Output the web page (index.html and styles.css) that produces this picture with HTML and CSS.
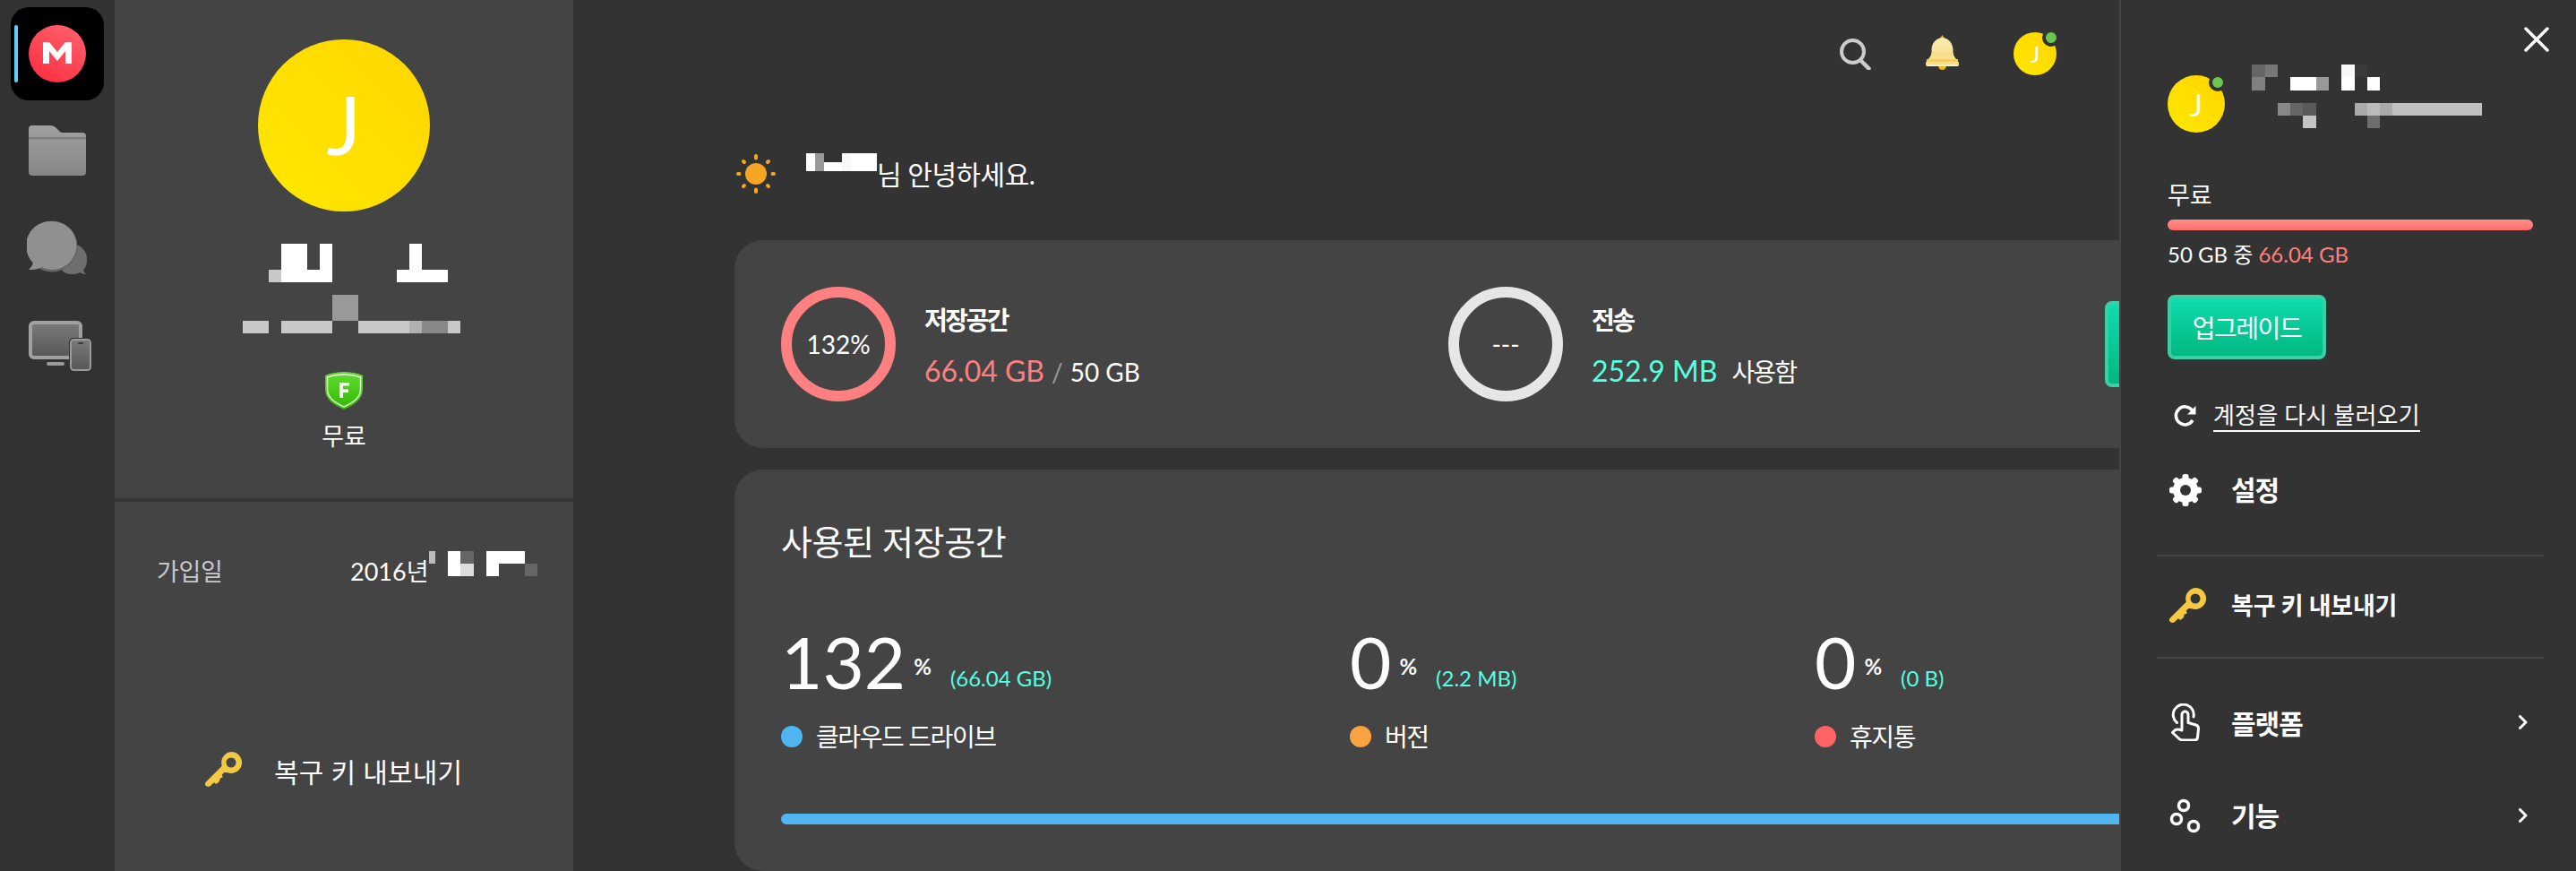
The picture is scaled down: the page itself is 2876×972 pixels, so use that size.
FILE: index.html
```html
<!DOCTYPE html>
<html lang="ko">
<head>
<meta charset="utf-8">
<title>MEGA 대시보드</title>
<link rel="stylesheet" href="styles.css">
</head>
<body>
<nav class="rail">
  <div class="rail-home">
    <span class="rail-marker"></span>
    <svg class="rail-logo" width="64" height="64" viewBox="0 0 64 64"><defs><linearGradient id="lg" x1="0.8" y1="0" x2="0.2" y2="1"><stop offset="0" stop-color="#ff5f6d"/><stop offset="1" stop-color="#ff3040"/></linearGradient></defs><circle cx="32" cy="32" r="32" fill="url(#lg)"/><path d="M16 19h7l9 11 9-11h7v24h-7V29l-9 11-9-11v14h-7z" fill="#fff"/></svg>
  </div>
  <svg class="rail-folder" width="64" height="56" viewBox="0 0 64 56"><defs><linearGradient id="fg" x1="0" y1="0" x2="0" y2="1"><stop offset="0" stop-color="#a0a0a0"/><stop offset="1" stop-color="#868686"/></linearGradient></defs><path d="M0 4a4 4 0 0 1 4-4h20c3 0 5 1 7 3l3 3c1 1 2 2 4 2h22a4 4 0 0 1 4 4v40a4 4 0 0 1-4 4H4a4 4 0 0 1-4-4z" fill="url(#fg)"/><rect y="13" width="64" height="2.5" fill="#7c7c7c"/></svg>
  <svg class="rail-chat" width="68" height="62" viewBox="30 245 68 62"><path d="M83 272a15 16 0 0 1 14 17c0 6-2 9-4 12 1 2 2 3 4 4-4 0-6-1-8-2-3 2-6 2-9 2-6 0-11-3-13-8z" fill="#6e6e6e"/><circle cx="58" cy="274" r="28.5" fill="#666"/><path d="M58 246a27 27 0 1 1-12 51c-4 3-9 3-14 3 2-2 4-4 5-8a27 27 0 0 1 21-46z" fill="#909090"/></svg>
  <svg class="rail-devices" width="70" height="56" viewBox="32 356 70 56"><defs><linearGradient id="dg" x1="0" y1="0" x2="0" y2="1"><stop offset="0" stop-color="#7a7a7a"/><stop offset="1" stop-color="#575757"/></linearGradient></defs><rect x="34" y="358" width="56" height="39" rx="4" fill="url(#dg)" stroke="#a0a0a0" stroke-width="4"/><rect x="52" y="402" width="20" height="4" rx="2" fill="#9a9a9a"/><rect x="77" y="375" width="25" height="37" rx="5" fill="#333"/><rect x="79" y="377" width="22" height="34" rx="3.5" fill="url(#dg)" stroke="#9a9a9a" stroke-width="2"/><rect x="87" y="380" width="6" height="2" rx="1" fill="#3a3a3a"/></svg>
</nav>

<aside class="profile">
  <section class="profile-top">
    <div class="avatar-large">J</div>
    <svg class="profile-mosaic" width="243" height="100" viewBox="0 0 243 100" shape-rendering="crispEdges">
      <rect x="43" width="29" height="43" fill="#fff"/><rect x="86" width="14" height="43" fill="#fff"/><rect x="186" width="14" height="29" fill="#fff"/>
      <rect x="29" y="29" width="14" height="14" fill="#c8c8c8"/><rect x="72" y="29" width="14" height="14" fill="#fff"/><rect x="172" y="29" width="57" height="14" fill="#fff"/>
      <rect x="100" y="57" width="29" height="29" fill="#999"/>
      <rect y="86" width="29" height="14" fill="#c8c8c8"/><rect x="43" y="86" width="57" height="14" fill="#c8c8c8"/><rect x="129" y="86" width="57" height="14" fill="#c8c8c8"/><rect x="186" y="86" width="14" height="14" fill="#b0b0b0"/><rect x="200" y="86" width="29" height="14" fill="#888"/><rect x="229" y="86" width="14" height="14" fill="#c8c8c8"/>
    </svg>
    <svg class="shield" width="44" height="43" viewBox="0 0 44 43"><defs><linearGradient id="sg" x1="0" y1="0" x2="0" y2="1"><stop offset="0" stop-color="#62dc30"/><stop offset="1" stop-color="#30b800"/></linearGradient></defs><path d="M1 5C8 2 15 1 22 1s14 1 21 4v16c0 10-9 17-21 22C10 38 1 31 1 21z" fill="url(#sg)"/><path d="M3.500 7C9 5 15 4 22 4s13 1 18.500 3v14c0 8-7 14-18.500 19C10.500 35 3.500 29 3.500 21z" fill="none" stroke="#e8f8e0" stroke-width="1.500"/><path d="M17 13h11v3.500h-7v4h6v3.500h-6v6h-4z" fill="#fff"/></svg>
    <p class="plan-name">무료</p>
  </section>
  <section class="profile-bottom">
    <div class="joined">
      <span class="joined-label">가입일</span>
      <span class="joined-value">2016년</span>
      <svg class="joined-mosaic" width="121" height="28" viewBox="0 0 121 28" shape-rendering="crispEdges"><rect width="7" height="14" fill="#bbb"/><rect x="21" width="14" height="28" fill="#fff"/><rect x="35" width="15" height="14" fill="#666"/><rect x="35" y="14" width="15" height="14" fill="#ddd"/><rect x="64" width="14" height="28" fill="#fff"/><rect x="78" width="29" height="14" fill="#fff"/><rect x="107" y="14" width="14" height="14" fill="#666"/></svg>
    </div>
    <div class="export">
      <svg width="42" height="42" viewBox="0 0 42 42"><use href="#key"/></svg>
      <span class="export-label">복구 키 내보내기</span>
    </div>
  </section>
</aside>

<main class="main">
  <header class="topbar">
    <svg width="35" height="35" viewBox="0 0 35 35"><circle cx="14.500" cy="14.500" r="12.500" fill="none" stroke="#ccc" stroke-width="4"/><path d="M23 24l9.500 9.500" stroke="#ccc" stroke-width="4.500" stroke-linecap="round"/></svg>
    <svg class="bell" width="37" height="39" viewBox="0 0 37 39"><defs><linearGradient id="bg" x1="0" y1="0" x2="0" y2="1"><stop offset="0" stop-color="#fbe9ae"/><stop offset="1" stop-color="#f7dc85"/></linearGradient></defs><path d="M18.500 0l2.500 4h-5z" fill="#f0b90b"/><path d="M14 34h9c0 3-2 5-4.500 5S14 37 14 34z" fill="#f0b90b"/><path d="M18.500 3C24 3 30 8 30.500 16v4c.5 4 3.500 7 5.500 9 .7 1 1 2 1 3v1c0 1.500-1 2-2 2H2c-1 0-2-.5-2-2v-1c0-1 .3-2 1-3 2-2 5-5 5.500-9v-4C7 8 13 3 18.500 3z" fill="url(#bg)"/><rect x="6.500" y="20" width="24" height="2.500" fill="#f7dd8c"/><rect x="1" y="27" width="35" height="3" fill="#f3cf5f"/><rect x="1" y="33" width="35" height="2" fill="#fdf0c4"/></svg>
    <div class="avatar-small">J<span class="status-dot"></span></div>
  </header>

  <div class="greeting">
    <svg width="44" height="44" viewBox="0 0 44 44"><circle cx="22" cy="22" r="12" fill="#f6a623"/><g stroke="#f6a623" stroke-width="4" stroke-linecap="round"><path d="M22 2v2.500M22 39.500V42M2 22h1.500M40.500 22H42M8 8l1 1M35 35l1 1M36 8l-1 1M9 35l-1 1"/></g></svg>
    <svg class="greeting-mosaic" width="79" height="20" viewBox="0 0 79 20" shape-rendering="crispEdges"><rect width="10" height="20" fill="#fff"/><rect x="10" width="10" height="20" fill="#999"/><rect x="20" y="10" width="20" height="10" fill="#fff"/><rect x="40" width="10" height="20" fill="#f8f8f8"/><rect x="50" width="29" height="20" fill="#fff"/></svg>
    <span class="greeting-text">님 안녕하세요.</span>
  </div>

  <section class="card usage">
    <div class="usage-block usage-storage">
      <div class="ring ring-storage">132%</div>
      <div class="usage-info">
        <h2 class="usage-title">저장공간</h2>
        <p class="usage-line"><span class="amount amount-red">66.04 GB</span><span class="slash">/</span><span class="total">50 GB</span></p>
      </div>
    </div>
    <div class="usage-block usage-transfer">
      <div class="ring ring-transfer">---</div>
      <div class="usage-info">
        <h2 class="usage-title">전송</h2>
        <p class="usage-line"><span class="amount amount-cyan">252.9 MB</span><span class="used">사용함</span></p>
      </div>
    </div>
    <span class="btn btn-clipped"></span>
  </section>

  <section class="card storage">
    <h2 class="storage-title">사용된 저장공간</h2>
    <div class="stats">
      <div class="stat stat-drive">
        <p class="stat-figures"><span class="stat-num">132</span><span class="stat-pct">%</span><span class="stat-size">(66.04 GB)</span></p>
        <p class="stat-label"><span class="dot dot-blue"></span>클라우드 드라이브</p>
      </div>
      <div class="stat stat-versions">
        <p class="stat-figures"><span class="stat-num">0</span><span class="stat-pct">%</span><span class="stat-size">(2.2 MB)</span></p>
        <p class="stat-label"><span class="dot dot-orange"></span>버전</p>
      </div>
      <div class="stat">
        <p class="stat-figures"><span class="stat-num">0</span><span class="stat-pct">%</span><span class="stat-size">(0 B)</span></p>
        <p class="stat-label"><span class="dot dot-red"></span>휴지통</p>
      </div>
    </div>
    <div class="storage-bar"></div>
  </section>
</main>

<aside class="panel">
  <svg class="close" width="28" height="28" viewBox="0 0 28 28"><path d="M2 2l24 24M26 2L2 26" stroke="#fff" stroke-width="3.500" stroke-linecap="round"/></svg>
  <div class="panel-body">
    <div class="panel-user">
      <div class="avatar-medium">J<span class="status-dot status-dot-panel"></span></div>
      <svg class="panel-mosaic" width="257" height="71" viewBox="0 0 257 71" shape-rendering="crispEdges"><rect width="15" height="14" fill="#666"/><rect x="15" width="14" height="14" fill="#777"/><rect x="100" width="15" height="14" fill="#f8f8f8"/><rect x="115" width="14" height="14" fill="#3a3a3a"/>
        <rect y="14" width="15" height="15" fill="#808080"/><rect x="43" y="14" width="29" height="15" fill="#fff"/><rect x="72" y="14" width="14" height="15" fill="#999"/><rect x="100" y="14" width="15" height="15" fill="#fff"/><rect x="129" y="14" width="14" height="15" fill="#fff"/>
        <rect x="29" y="43" width="14" height="14" fill="#888"/><rect x="43" y="43" width="14" height="14" fill="#666"/><rect x="57" y="43" width="15" height="14" fill="#5a5a5a"/><rect x="115" y="43" width="14" height="14" fill="#aaa"/><rect x="129" y="43" width="14" height="14" fill="#bbb"/><rect x="143" y="43" width="14" height="14" fill="#aaa"/><rect x="157" y="43" width="100" height="14" fill="#c0c0c0"/>
        <rect x="57" y="57" width="15" height="14" fill="#c4c4c4"/><rect x="129" y="57" width="14" height="14" fill="#6e6e6e"/></svg>
    </div>
    <p class="panel-plan">무료</p>
    <div class="panel-bar"></div>
    <p class="panel-quota">50 GB 중 <span class="quota-used">66.04 GB</span></p>
    <span class="btn">업그레이드</span>
    <p class="reload">
      <svg width="26" height="24" viewBox="0 0 26 24"><path d="M21 17a10 10 0 1 1-.5-11" fill="none" stroke="#fff" stroke-width="3.500"/><path d="M24.500 1v9.500h-9.500z" fill="#fff"/></svg>
      <span class="reload-link">계정을 다시 불러오기</span>
    </p>
  </div>
  <ul class="menu">
    <li class="menu-row menu-settings">
      <svg class="icon-gear" width="36" height="36" viewBox="0 0 36 36"><g fill="#fff"><rect x="14.500" y="0" width="7" height="36" rx="2.500"/><rect x="14.500" y="0" width="7" height="36" rx="2.500" transform="rotate(45 18 18)"/><rect x="14.500" y="0" width="7" height="36" rx="2.500" transform="rotate(90 18 18)"/><rect x="14.500" y="0" width="7" height="36" rx="2.500" transform="rotate(135 18 18)"/></g><circle cx="18" cy="18" r="14" fill="#fff"/><circle cx="18" cy="18" r="6" fill="#333"/></svg>
      <span>설정</span>
    </li>
    <li class="menu-row menu-export">
      <svg class="icon-key" width="42" height="42" viewBox="0 0 42 42"><defs><g id="key"><path d="M30 0a12 12 0 1 1-4 23.300l-3.500-.3-2.700 2.600 1 3-3 1-1 3.700-3.400 2.700-2.600-1.800-3.300 3.300c-1.500 1.500-3.500 2-5.500.5-1.500-1.500-1.500-3 0-4.500L19.500 16l.3-.2A12 12 0 0 1 30 0zm0 6.500a5.500 5.500 0 1 0 0 11 5.500 5.500 0 0 0 0-11z" fill="#f3c944" fill-rule="evenodd"/></g></defs><use href="#key"/></svg>
      <span>복구 키 내보내기</span>
    </li>
    <li class="menu-row menu-platform">
      <svg class="icon-hand" width="32" height="42" viewBox="0 0 32 42"><g fill="none" stroke="#fff" stroke-width="3" stroke-linecap="round" stroke-linejoin="round"><path d="M6.500 21.500A11.500 11.500 0 1 1 25 15"/><path d="M12 28V12.500a3.500 3.500 0 0 1 7 0v9l8.500 2.500c2 .6 3 2 3 4l-1 10c-.2 2-1.500 3-3.500 3H13c-2 0-3-.6-4-1.500L1.500 32.500l2.500-2.500c2-1.500 5.500-1 8 0"/></g></svg>
      <span>플랫폼</span>
      <svg class="chevron" width="10" height="16" viewBox="0 0 10 16"><path d="M1.500 1.500L8 8l-6.500 6.500" fill="none" stroke="#fff" stroke-width="3" stroke-linecap="round" stroke-linejoin="round"/></svg>
    </li>
    <li class="menu-row menu-features">
      <svg class="icon-nodes" width="35" height="39" viewBox="0 0 35 39"><g fill="none" stroke="#fff" stroke-width="3.500"><circle cx="16" cy="8" r="5.500"/><circle cx="8" cy="23" r="5.500"/><circle cx="27" cy="31" r="5.500"/></g></svg>
      <span>기능</span>
      <svg class="chevron" width="10" height="16" viewBox="0 0 10 16"><path d="M1.500 1.500L8 8l-6.500 6.500" fill="none" stroke="#fff" stroke-width="3" stroke-linecap="round" stroke-linejoin="round"/></svg>
    </li>
  </ul>
</aside>
</body>
</html>
```
FILE: styles.css
```css
* { box-sizing: border-box; }
html, body { margin: 0; height: 100%; }
body {
  display: flex;
  width: 2876px;
  height: 972px;
  overflow: hidden;
  background: #333;
  color: #fff;
  font-family: Lato, "Noto Sans CJK KR", sans-serif;
  font-size: 28px;
}
p, h2, ul { margin: 0; padding: 0; font-weight: 400; }
svg { display: block; flex-shrink: 0; }

/* left rail */
.rail {
  flex: 0 0 128px;
  display: flex;
  flex-direction: column;
  padding: 8px 0 0 12px;
  background: #323232;
}
.rail-home {
  width: 104px;
  height: 104px;
  display: flex;
  align-items: center;
  padding-left: 4px;
  gap: 12px;
  background: #000;
  border-radius: 20px;
}
.rail-marker { width: 4px; height: 64px; border-radius: 2px; background: #58d2fb; }
.rail-folder { margin: 28px 0 0 20px; }
.rail-chat { margin: 50px 0 0 18px; }
.rail-devices { margin: 50px 0 0 20px; }

/* profile column */
.profile {
  flex: 0 0 512px;
  display: flex;
  flex-direction: column;
  gap: 4px;
  background: #363636;
}
.profile-top {
  height: 556px;
  display: flex;
  flex-direction: column;
  align-items: center;
  padding-top: 44px;
  background: #444;
}
.avatar-large,
.avatar-small,
.avatar-medium {
  display: flex;
  align-items: center;
  justify-content: center;
  border-radius: 50%;
  background: linear-gradient(45deg, #ffe800, #ffd500);
  flex-shrink: 0;
}
.avatar-large { width: 192px; height: 192px; padding-bottom: 6px; font-size: 92px; }
.profile-mosaic { align-self: flex-start; margin: 36px 0 0 143px; }
.shield { margin-top: 42px; }
.plan-name { margin-top: 12px; font-size: 27px; line-height: 36px; }
.profile-bottom { flex: 1; display: flex; flex-direction: column; padding: 55px 0 0 47px; background: #444; }
.joined { display: flex; align-items: flex-start; }
.joined-label { width: 216px; margin-top: 5px; font-size: 27px; line-height: 36px; letter-spacing: -.3px; color: #c8c8c8; }
.joined-value { font-size: 27px; line-height: 36px; margin-top: 5px; }
.joined-mosaic { margin-left: 1px; }
.export { display: flex; align-items: center; gap: 36px; margin: 182px 0 0 53px; font-size: 30px; letter-spacing: .2px; }

/* main */
.main {
  flex: 1;
  min-width: 0;
  display: flex;
  flex-direction: column;
  overflow: hidden;
  background: #333;
}
.topbar {
  display: flex;
  align-items: center;
  justify-content: flex-end;
  gap: 61px;
  height: 48px;
  margin-top: 36px;
  padding-right: 70px;
}
.bell { margin-top: -3px; }
.avatar-small { position: relative; width: 48px; height: 48px; font-size: 25px; }
.avatar-medium { position: relative; width: 64px; height: 64px; font-size: 34px; }
.status-dot {
  position: absolute;
  top: -4px;
  right: -4px;
  width: 20px;
  height: 20px;
  border: 4px solid #333;
  border-radius: 50%;
  background: #6ac84e;
}
.status-dot-panel { top: -2px; right: -2px; }
.greeting { display: flex; align-items: flex-start; margin: 88px 0 0 182px; height: 46px; }
.greeting-mosaic { margin-left: 34px; margin-top: -1px; }
.greeting-text { font-size: 30px; line-height: 40px; margin-top: 2px; letter-spacing: -.5px; }

.card { flex-shrink: 0; width: 1900px; margin-left: 180px; background: #444; border-radius: 32px; }
.usage { display: flex; align-items: center; height: 232px; margin-top: 50px; padding-left: 52px; }
.usage-block { display: flex; align-items: center; gap: 32px; }
.usage-storage { width: 745px; }
.usage-transfer { width: 733px; }
.ring {
  width: 128px;
  height: 128px;
  display: flex;
  align-items: center;
  justify-content: center;
  border: 12px solid;
  border-radius: 50%;
  font-size: 28px;
}
.ring-storage { border-color: #ff8080; }
.ring-transfer { border-color: #e6e6e6; }
.usage-info { display: flex; flex-direction: column; gap: 19px; margin-top: 5px; }
.usage-title { font-size: 28px; line-height: 36px; font-weight: 700; letter-spacing: -2.500px; }
.usage-line { display: flex; align-items: baseline; line-height: 40px; }
.amount { font-size: 32px; }
.amount-red { color: #ff7f7f; }
.amount-cyan { color: #55ffe0; }
.slash { margin: 0 8px; color: #9a9a9a; font-size: 28px; }
.total { font-size: 28px; }
.used { margin-left: 16px; font-size: 28px; letter-spacing: -1.800px; }
.btn {
  display: inline-flex;
  align-items: center;
  justify-content: center;
  flex-shrink: 0;
  width: 177px;
  height: 72px;
  border: 4px solid #3ccfa6;
  border-radius: 8px;
  background: linear-gradient(#10dcae, #00b780);
  font-size: 28px;
  letter-spacing: -1.500px;
}
.btn-clipped { width: 220px; height: 96px; }

.storage { height: 448px; margin-top: 24px; padding: 56px 0 0 52px; }
.storage-title { font-size: 38px; line-height: 48px; letter-spacing: -.4px; }
.stats { display: flex; margin-top: 72px; }
.stat { flex-shrink: 0; }
.stat-drive { width: 635px; }
.stat-versions { width: 519px; }
.stat-figures { display: flex; align-items: flex-start; height: 76px; }
.stat-num { font-size: 80px; line-height: 76px; font-weight: 400; }
.stat-pct { margin: 29px 0 0 9px; font-size: 24px; line-height: 30px; font-weight: 700; }
.stat-size { margin: 42px 0 0 21px; font-size: 24px; line-height: 30px; color: #55ffe0; }
.stat-label { display: flex; align-items: center; gap: 15px; margin-top: 30px; font-size: 28px; line-height: 32px; letter-spacing: -1.400px; }
.dot { width: 24px; height: 24px; border-radius: 50%; }
.dot-blue { background: #4fb6f2; }
.dot-orange { background: #f9a343; }
.dot-red { background: #ff6464; }
.storage-bar { width: 1800px; height: 12px; margin-top: 70px; border-radius: 6px; background: #4fb6f2; }

/* account panel */
.panel {
  flex: 0 0 510px;
  display: flex;
  flex-direction: column;
  padding: 30px 36px 0 40px;
  border-left: 2px solid #444;
  background: #333;
}
.close { align-self: flex-end; margin-right: -6px; }
.panel-body { display: flex; flex-direction: column; align-items: flex-start; padding-left: 12px; }
.panel-user { display: flex; align-items: flex-start; gap: 30px; margin-top: 14px; }
.avatar-medium { margin-top: 12px; }
.panel-plan { margin-top: 53px; font-size: 27px; line-height: 34px; }
.panel-bar { width: 408px; height: 12px; margin-top: 10px; border-radius: 6px; background: linear-gradient(#ff8f88, #ff6d6d); }
.panel-quota { margin-top: 12px; font-size: 24px; line-height: 30px; }
.quota-used { color: #ff7f7f; }
.panel-body .btn { margin-top: 30px; }
.reload { display: flex; align-items: center; gap: 18px; margin: 45px 0 0 7px; font-size: 26px; letter-spacing: .2px; }
.reload-link { border-bottom: 2px solid #fff; line-height: 34px; }

.menu { list-style: none; margin-top: 47px; }
.menu-row { display: flex; align-items: center; font-weight: 700; font-size: 30px; padding-right: 18px; letter-spacing: -1px; }
.menu-settings { height: 90px; padding-bottom: 54px; }
.menu-export { height: 116px; border-top: 2px solid #444; border-bottom: 2px solid #444; font-size: 27px; letter-spacing: -.2px; }
.menu-platform { height: 142px; }
.menu-features { height: 66px; }
.menu-settings > span, .menu-export > span { margin-bottom: 5px; }
.menu-features > span { margin-bottom: 2px; }
.icon-gear { margin: 0 33px 0 14px; }
.icon-key { margin: 0 28px 0 13px; }
.icon-hand { margin: 0 35px 0 16px; }
.icon-nodes { margin: 0 34px 0 14px; }
.chevron { margin-left: auto; }
```
